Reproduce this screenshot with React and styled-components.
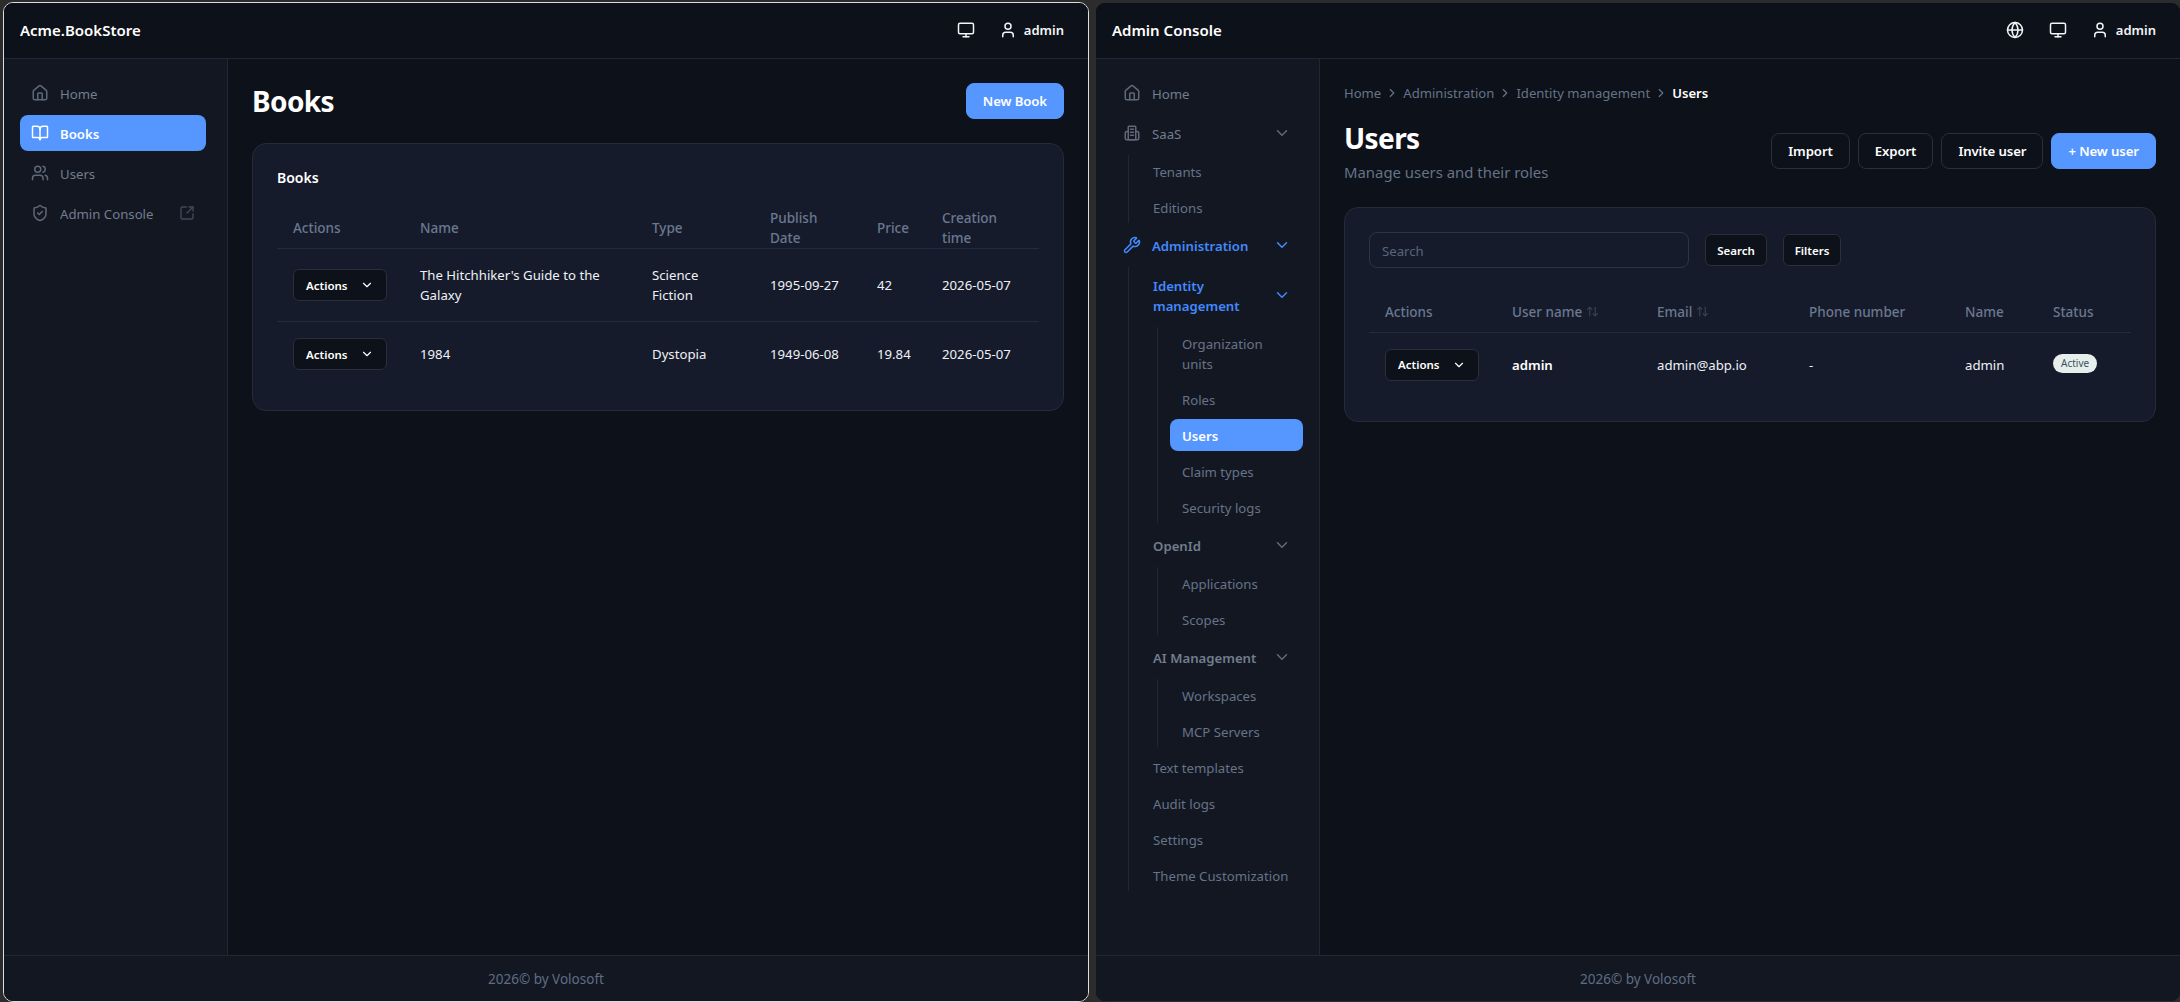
import styled, { createGlobalStyle } from 'styled-components';
import {
    House, BookOpen, Users as UsersIcon, ShieldCheck, SquareArrowOutUpRight, Monitor, User, Globe,
    Wrench, ChevronDown, ChevronRight, ArrowUpDown,
} from 'lucide-react';

const GlobalStyle = createGlobalStyle`
    html, body {
        margin: 0;
        height: 100%;
        background: #2c2c2c;
        overflow: hidden;
    }
    * {
        box-sizing: border-box;
    }
    body {
        font-family: "Noto Sans", "Open Sans", sans-serif;
        font-size: 14px;
        line-height: 20px;
    }
`;

const Desktop = styled.div`
    display: flex;
    gap: 6px;
    width: 2180px;
    height: 1002px;
    padding: 2px 0 0 3px;
    overflow: hidden;
`;

const Window = styled.div`
    flex: 0 0 1086px;
    display: flex;
    flex-direction: column;
    border: 1px solid ${(p) => (p.$focused ? '#dcdcdc' : '#2c2c2c')};
    border-radius: 10px;
    overflow: hidden;
    background: #0d1119;
`;

const TopBar = styled.header`
    flex: 0 0 56px;
    display: flex;
    align-items: center;
    justify-content: space-between;
    padding: 0 24px 2px 16px;
    border-bottom: 1px solid #232733;
    background: #0d1119;
`;

const Brand = styled.div`
    color: #fff;
    font-size: 15px;
    font-weight: 600;
`;

const TopActions = styled.div`
    display: flex;
    align-items: center;
    color: #f2f4f8;
`;

const TopIcon = styled.span`
    display: flex;
    margin-right: ${(p) => p.$gap}px;
`;

const UserName = styled.span`
    font-size: 13px;
    font-weight: 600;
`;

const Body = styled.div`
    flex: 1;
    display: flex;
    min-height: 0;
`;

const Sidebar = styled.nav`
    flex: 0 0 224px;
    padding: 16px ${(p) => p.$right}px 0 16px;
    background: #131722;
    border-right: 1px solid #232733;
`;

const NavList = styled.div`
    display: flex;
    flex-direction: column;
    gap: 4px;
`;

const SubList = styled.div`
    display: flex;
    flex-direction: column;
    gap: 4px;
    margin: 4px 0 0 16px;
    padding-left: 12px;
    border-left: 1px solid #232733;
`;

const NavItem = styled.div`
    display: flex;
    align-items: center;
    gap: ${(p) => (p.$icon ? 11 : 12)}px;
    min-height: ${(p) => (p.$sub ? 32 : 36)}px;
    padding: ${(p) => (p.$sub ? '7px 12px 5px' : `9px 12px 7px ${p.$icon ? 11 : 12}px`)};
    border-radius: 8px;
    color: ${(p) => (p.$selected ? '#fff' : p.$open ? '#4289ff' : p.$sub ? '#667388' : '#727d8e')};
    background: ${(p) => (p.$selected ? '#5596ff' : 'transparent')};
    font-weight: ${(p) => (p.$selected || p.$open || p.$group ? 600 : 400)};
    font-size: 13.2px;

    svg {
        flex: none;
        margin-top: -2px;
        opacity: ${(p) => (p.$selected || p.$open ? 1 : 0.8)};
    }
`;

const NavLabel = styled.span`
    flex: 1;
`;

const OutLink = styled(SquareArrowOutUpRight)`
    margin-right: -1px;
    color: #4d5768;
`;

const PageBody = styled.div`
    flex: 1;
    min-width: 0;
    padding: 24px 24px 0;
`;

const Crumbs = styled.div`
    display: flex;
    align-items: center;
    gap: 4px;
    margin-bottom: 17px;
    color: #667388;
    font-size: 13.1px;
`;

const CrumbCurrent = styled.span`
    color: #fff;
    font-weight: 600;
`;

const PageHead = styled.div`
    display: flex;
    align-items: center;
    justify-content: space-between;
    margin-bottom: ${(p) => p.$gap}px;
`;

const PageTitle = styled.h1`
    margin: 0;
    color: #fff;
    font-size: 28px;
    line-height: 36px;
    font-weight: 700;
    letter-spacing: -0.6px;
`;

const PageSubtitle = styled.div`
    margin-top: 6px;
    color: #667388;
    font-size: 14.9px;
`;

const ButtonRow = styled.div`
    display: flex;
    gap: 8px;
`;

const Button = styled.button`
    height: 36px;
    padding: 0 16px;
    border: 1px solid ${(p) => (p.$primary ? '#5596ff' : '#2a2f3b')};
    border-radius: 8px;
    background: ${(p) => (p.$primary ? '#5596ff' : '#0d1119')};
    color: #fff;
    font: 600 13.2px "Noto Sans", sans-serif;
    letter-spacing: -0.1px;
    white-space: nowrap;
`;

const SmallButton = styled.button`
    display: inline-flex;
    align-items: center;
    justify-content: ${(p) => (p.$menu ? 'space-between' : 'center')};
    width: ${(p) => p.$width}px;
    height: 32px;
    padding: 0 12px;
    border: 1px solid #2a2f3b;
    border-radius: 6px;
    background: #0d1119;
    color: #fff;
    font: 600 11.5px "Noto Sans", sans-serif;
`;

const Card = styled.section`
    padding: 24px;
    border: 1px solid #262b3a;
    border-radius: 14px;
    background: #161b2b;
`;

const CardTitle = styled.div`
    margin-bottom: 20px;
    color: #fff;
    font-size: 14px;
    font-weight: 600;
`;

const Toolbar = styled.div`
    display: flex;
    align-items: center;
    gap: 16px;
    margin-bottom: 24px;
`;

const SearchBox = styled.input`
    width: 320px;
    height: 36px;
    padding: 2px 12px 0;
    border: 1px solid #2f3443;
    border-radius: 8px;
    background: transparent;
    font: 400 13.2px "Noto Sans", sans-serif;
    color: #fff;

    &::placeholder {
        color: #596578;
    }
`;

const Table = styled.table`
    width: 762px;
    table-layout: fixed;
    border-collapse: collapse;
    font-size: 13.2px;
`;

const Col = styled.col`
    width: ${(p) => p.$width}px;
`;

const Th = styled.th`
    height: 40px;
    padding: 0 16px;
    border-bottom: 1px solid #262b3a;
    text-align: left;
    vertical-align: middle;
    color: #6a7890;
    font-size: 13.5px;
    font-weight: 500;
`;

const SortLabel = styled.span`
    display: inline-flex;
    align-items: center;
    gap: 4px;

    svg {
        color: #3b4454;
    }
`;

const Td = styled.td`
    padding: 16px;
    color: ${(p) => (p.$strong ? '#fff' : '#eef1f6')};
    font-weight: ${(p) => (p.$strong ? 600 : 400)};
    vertical-align: middle;
`;

const Tr = styled.tr`
    & + & {
        border-top: 1px solid #262b3a;
    }
`;

const Badge = styled.span`
    display: inline-block;
    height: 19px;
    padding: 0 8px;
    border-radius: 10px;
    background: #e6efec;
    color: #3a5260;
    font-size: 10px;
    line-height: 18px;
    transform: translateY(-2px);
`;

const Footer = styled.footer`
    flex: 0 0 46px;
    display: flex;
    align-items: center;
    justify-content: center;
    border-top: 1px solid #232733;
    background: #131722;
    color: #5f6d84;
    font-size: 13.5px;
`;

const books = [
    { name: "The Hitchhiker's Guide to the Galaxy", type: 'Science Fiction', date: '1995-09-27', price: '42' },
    { name: '1984', type: 'Dystopia', date: '1949-06-08', price: '19.84' },
];

const TenantIcon = () => (
    <svg width="18" height="18" viewBox="0 0 24 24" fill="none" stroke="currentColor" strokeWidth="2" strokeLinecap="round" strokeLinejoin="round">
        <rect x="7" y="3" width="10" height="18" rx="1" />
        <path d="M7 10H5a2 2 0 0 0-2 2v7a2 2 0 0 0 2 2h14a2 2 0 0 0 2-2v-7a2 2 0 0 0-2-2h-2" />
        <path d="M10 7h4M10 11h4M10 15h4" />
    </svg>
);

const ActionsMenu = () => (
    <SmallButton $menu $width={94}>
        Actions
        <ChevronDown size={14} />
    </SmallButton>
);

const BookStoreWindow = () => (
    <Window $focused>
        <TopBar>
            <Brand>Acme.BookStore</Brand>
            <TopActions>
                <TopIcon $gap={24}><Monitor size={18} /></TopIcon>
                <TopIcon $gap={7}><User size={18} /></TopIcon>
                <UserName>admin</UserName>
            </TopActions>
        </TopBar>
        <Body>
            <Sidebar $right={21}>
                <NavList>
                    <NavItem $icon><House size={18} /><NavLabel>Home</NavLabel></NavItem>
                    <NavItem $icon $selected><BookOpen size={18} /><NavLabel>Books</NavLabel></NavItem>
                    <NavItem $icon><UsersIcon size={18} /><NavLabel>Users</NavLabel></NavItem>
                    <NavItem $icon>
                        <ShieldCheck size={18} />
                        <NavLabel>Admin Console</NavLabel>
                        <OutLink size={16} />
                    </NavItem>
                </NavList>
            </Sidebar>
            <PageBody>
                <PageHead $gap={24}>
                    <PageTitle>Books</PageTitle>
                    <Button $primary>New Book</Button>
                </PageHead>
                <Card>
                    <CardTitle>Books</CardTitle>
                    <Table>
                        <colgroup>
                            {[127, 232, 118, 107, 65, 113].map((w, i) => <Col key={i} $width={w} />)}
                        </colgroup>
                        <thead>
                            <tr>
                                <Th>Actions</Th>
                                <Th>Name</Th>
                                <Th>Type</Th>
                                <Th>Publish Date</Th>
                                <Th>Price</Th>
                                <Th>Creation time</Th>
                            </tr>
                        </thead>
                        <tbody>
                            {books.map((book) => (
                                <Tr key={book.name}>
                                    <Td><ActionsMenu /></Td>
                                    <Td>{book.name}</Td>
                                    <Td>{book.type}</Td>
                                    <Td>{book.date}</Td>
                                    <Td>{book.price}</Td>
                                    <Td>2026-05-07</Td>
                                </Tr>
                            ))}
                        </tbody>
                    </Table>
                </Card>
            </PageBody>
        </Body>
        <Footer>2026© by Volosoft</Footer>
    </Window>
);

const Group = ({ label, open, children }) => (
    <div>
        <NavItem $open={open} $group>
            <NavLabel>{label}</NavLabel>
            <ChevronDown size={18} />
        </NavItem>
        <SubList>{children}</SubList>
    </div>
);

const AdminWindow = () => (
    <Window>
        <TopBar>
            <Brand>Admin Console</Brand>
            <TopActions>
                <TopIcon $gap={25}><Globe size={18} /></TopIcon>
                <TopIcon $gap={24}><Monitor size={18} /></TopIcon>
                <TopIcon $gap={7}><User size={18} /></TopIcon>
                <UserName>admin</UserName>
            </TopActions>
        </TopBar>
        <Body>
            <Sidebar $right={16}>
                <NavList>
                    <NavItem $icon><House size={18} /><NavLabel>Home</NavLabel></NavItem>
                    <div>
                        <NavItem $icon>
                            <TenantIcon />
                            <NavLabel>SaaS</NavLabel>
                            <ChevronDown size={18} />
                        </NavItem>
                        <SubList>
                            <NavItem $sub>Tenants</NavItem>
                            <NavItem $sub>Editions</NavItem>
                        </SubList>
                    </div>
                    <div>
                        <NavItem $icon $open>
                            <Wrench size={18} />
                            <NavLabel>Administration</NavLabel>
                            <ChevronDown size={18} />
                        </NavItem>
                        <SubList>
                            <Group label="Identity management" open>
                                <NavItem $sub>Organization units</NavItem>
                                <NavItem $sub>Roles</NavItem>
                                <NavItem $sub $selected>Users</NavItem>
                                <NavItem $sub>Claim types</NavItem>
                                <NavItem $sub>Security logs</NavItem>
                            </Group>
                            <Group label="OpenId">
                                <NavItem $sub>Applications</NavItem>
                                <NavItem $sub>Scopes</NavItem>
                            </Group>
                            <Group label="AI Management">
                                <NavItem $sub>Workspaces</NavItem>
                                <NavItem $sub>MCP Servers</NavItem>
                            </Group>
                            <NavItem $sub>Text templates</NavItem>
                            <NavItem $sub>Audit logs</NavItem>
                            <NavItem $sub>Settings</NavItem>
                            <NavItem $sub>Theme Customization</NavItem>
                        </SubList>
                    </div>
                </NavList>
            </Sidebar>
            <PageBody>
                <Crumbs>
                    <span>Home</span>
                    <ChevronRight size={14} />
                    <span>Administration</span>
                    <ChevronRight size={14} />
                    <span>Identity management</span>
                    <ChevronRight size={14} />
                    <CrumbCurrent>Users</CrumbCurrent>
                </Crumbs>
                <PageHead $gap={25}>
                    <div>
                        <PageTitle>Users</PageTitle>
                        <PageSubtitle>Manage users and their roles</PageSubtitle>
                    </div>
                    <ButtonRow>
                        <Button>Import</Button>
                        <Button>Export</Button>
                        <Button>Invite user</Button>
                        <Button $primary>+ New user</Button>
                    </ButtonRow>
                </PageHead>
                <Card>
                    <Toolbar>
                        <SearchBox placeholder="Search" />
                        <SmallButton $width={62}>Search</SmallButton>
                        <SmallButton $width={58}>Filters</SmallButton>
                    </Toolbar>
                    <Table>
                        <colgroup>
                            {[127, 145, 152, 156, 88, 94].map((w, i) => <Col key={i} $width={w} />)}
                        </colgroup>
                        <thead>
                            <tr>
                                <Th>Actions</Th>
                                <Th><SortLabel>User name <ArrowUpDown size={13} /></SortLabel></Th>
                                <Th><SortLabel>Email <ArrowUpDown size={13} /></SortLabel></Th>
                                <Th>Phone number</Th>
                                <Th>Name</Th>
                                <Th>Status</Th>
                            </tr>
                        </thead>
                        <tbody>
                            <Tr>
                                <Td><ActionsMenu /></Td>
                                <Td $strong>admin</Td>
                                <Td>admin@abp.io</Td>
                                <Td>-</Td>
                                <Td>admin</Td>
                                <Td><Badge>Active</Badge></Td>
                            </Tr>
                        </tbody>
                    </Table>
                </Card>
            </PageBody>
        </Body>
        <Footer>2026© by Volosoft</Footer>
    </Window>
);

export default function App() {
    return (
        <>
            <GlobalStyle />
            <Desktop>
                <BookStoreWindow />
                <AdminWindow />
            </Desktop>
        </>
    );
}
